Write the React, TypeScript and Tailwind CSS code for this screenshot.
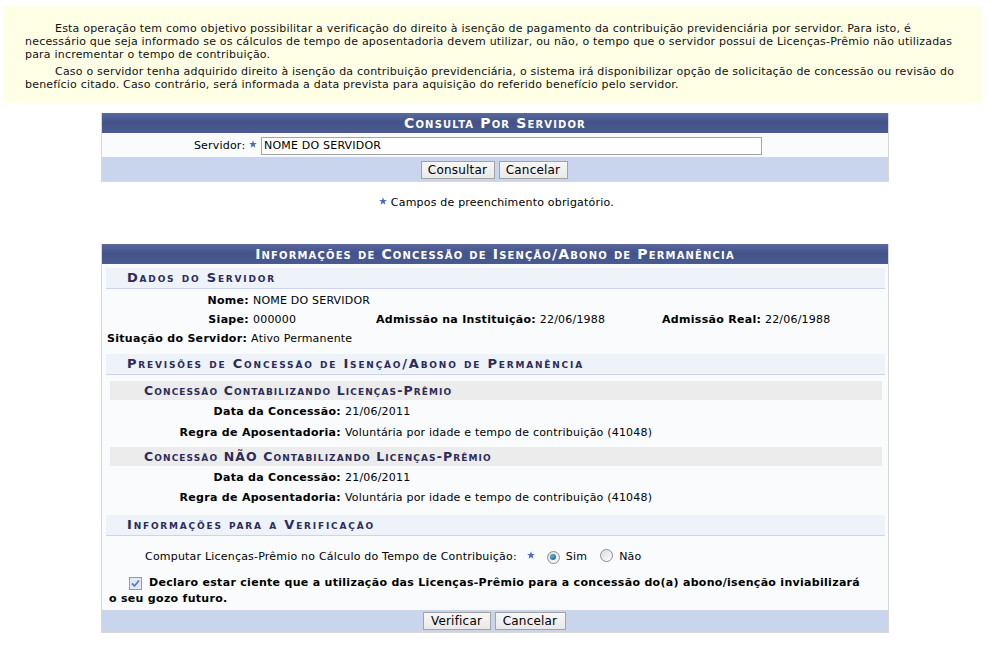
import React from "react";

const Star = () => (
  <svg width="8" height="8" viewBox="0 0 10 10" className="inline-block align-[1px]">
    <path d="M5 0.3 L6.2 3.7 L9.8 3.8 L7 6 L8 9.6 L5 7.5 L2 9.6 L3 6 L0.2 3.8 L3.8 3.7 Z" fill="#4a6cc0" />
  </svg>
);

const Btn = ({ children, w }: { children: React.ReactNode; w: string }) => (
  <button
    className={`h-[18px] ${w} border border-[#a3a3a3] bg-[linear-gradient(to_bottom,#f7f7f7,#e9e9e9)] text-[12px] leading-[16px] tracking-[0.2px] text-black`}
  >
    {children}
  </button>
);

const Caption = ({ children }: { children: React.ReactNode }) => (
  <div className="h-[20px] bg-[linear-gradient(to_bottom,#5a6a9e,#43538a_45%,#4a5b91)] text-center text-[14px] font-bold leading-[20px] tracking-[1.15px] text-white [font-variant:small-caps]">
    {children}
  </div>
);

const SubHeader = ({ children, cls }: { children: React.ReactNode; cls: string }) => (
  <div
    className={`ml-[4px] mr-[3px] h-[21px] border-b border-[#c8d5ec] bg-[#eef2f9] pl-[21px] text-[13px] font-bold leading-[20px] tracking-[1.8px] text-[#2c2c5a] [font-variant:small-caps] ${cls}`}
  >
    {children}
  </div>
);

const SubSub = ({ children, cls }: { children: React.ReactNode; cls: string }) => (
  <div
    className={`ml-[8px] mr-[6px] h-[19px] bg-[#ececec] pl-[34px] text-[12.5px] font-bold leading-[19px] tracking-[1.1px] text-[#2c2c5a] [font-variant:small-caps] ${cls}`}
  >
    {children}
  </div>
);

const Radio = ({ checked }: { checked: boolean }) => (
  <span className="inline-flex h-[13px] w-[13px] items-center justify-center rounded-full border border-[#8d8d8d] bg-[linear-gradient(to_bottom_right,#dcdcdc,#ffffff)] align-[-2px]">
    {checked && <span className="h-[6px] w-[6px] rounded-full bg-[radial-gradient(circle_at_35%_35%,#5ab0d8,#0a5a88)]" />}
  </span>
);

const L = ({ children }: { children: React.ReactNode }) => (
  <b className="tracking-[0.3px]">{children}</b>
);

export default function App() {
  return (
    <div className="min-h-[669px] bg-white pt-[6px] font-['Verdana','DejaVu_Sans',sans-serif] text-[11px] leading-[13px] tracking-[0.2px] text-black">
      <div className="ml-[3px] mr-[11px] bg-[#ffffe6] pb-[12px] pl-[22px] pr-[22px] pt-[16px] text-[#111]">
        <p className="indent-[30px]">
          Esta operação tem como objetivo possibilitar a verificação do direito à isenção de pagamento da contribuição previdenciária por servidor. Para isto, é necessário que seja informado se os cálculos de tempo de aposentadoria devem utilizar, ou não, o tempo que o servidor possui de Licenças-Prêmio não utilizadas para incrementar o tempo de contribuição.
        </p>
        <p className="mt-[4px] indent-[30px]">
          Caso o servidor tenha adquirido direito à isenção da contribuição previdenciária, o sistema irá disponibilizar opção de solicitação de concessão ou revisão do benefício citado. Caso contrário, será informada a data prevista para aquisição do referido benefício pelo servidor.
        </p>
      </div>

      {/* Consulta */}
      <div className="ml-[101px] mt-[10px] w-[788px] border border-[#d8d8d8] border-t-0">
        <Caption>Consulta Por Servidor</Caption>
        <div className="flex h-[24px] items-center bg-[#f9fbfd] pt-[1px]">
          <div className="w-[159px] pr-[4px] text-right">
            Servidor: <Star />
          </div>
          <div className="h-[18px] w-[501px] border border-[#a5a5a5] bg-white pl-[2px] text-[11px] leading-[16px]">
            NOME DO SERVIDOR
          </div>
        </div>
        <div className="flex h-[24px] items-center justify-center gap-[4px] bg-[#c8d5ec] pr-[2px] pt-[1px]">
          <Btn w="w-[74px]">Consultar</Btn>
          <Btn w="w-[69px]">Cancelar</Btn>
        </div>
      </div>

      <div className="mt-[14px] text-center">
        <Star /> Campos de preenchimento obrigatório.
      </div>

      {/* Informações */}
      <div className="ml-[101px] mt-[35px] w-[788px] border border-[#d8d8d8] border-t-0 bg-[#f9fbfd]">
        <Caption>Informações de Concessão de Isenção/Abono de Permanência</Caption>
        <div className="pt-[4px]">
          <SubHeader cls="">Dados do Servidor</SubHeader>
          <div className="mt-[2px] pl-[5px]">
            <div className="flex h-[19px] items-center">
              <div className="w-[146px] pr-[4px] text-right"><L>Nome:</L></div>
              <div>NOME DO SERVIDOR</div>
            </div>
            <div className="flex h-[19px] items-center">
              <div className="w-[146px] pr-[4px] text-right"><L>Siape:</L></div>
              <div className="w-[123px]">000000</div>
              <div className="w-[286px]">
                <L>Admissão na Instituição:</L> 22/06/1988
              </div>
              <div>
                <L>Admissão Real:</L> 22/06/1988
              </div>
            </div>
            <div className="flex h-[19px] items-center">
              <div className="pr-[4px]"><L>Situação do Servidor:</L></div>
              <div>Ativo Permanente</div>
            </div>
          </div>

          <SubHeader cls="mt-[6px] h-[20px] leading-[19px]">Previsões de Concessão de Isenção/Abono de Permanência</SubHeader>

          <SubSub cls="mt-[6px]">Concessão Contabilizando Licenças-Prêmio</SubSub>
          <div className="mt-[1px] pl-[5px]">
            <div className="flex h-[21px] items-center">
              <div className="w-[238px] pr-[4px] text-right"><L>Data da Concessão:</L></div>
              <div>21/06/2011</div>
            </div>
            <div className="flex h-[21px] items-center">
              <div className="w-[238px] pr-[4px] text-right"><L>Regra de Aposentadoria:</L></div>
              <div>Voluntária por idade e tempo de contribuição (41048)</div>
            </div>
          </div>

          <SubSub cls="mt-[4px]">Concessão NÃO Contabilizando Licenças-Prêmio</SubSub>
          <div className="mt-[1px] pl-[5px]">
            <div className="flex h-[20px] items-center">
              <div className="w-[238px] pr-[4px] text-right"><L>Data da Concessão:</L></div>
              <div>21/06/2011</div>
            </div>
            <div className="flex h-[20px] items-center">
              <div className="w-[238px] pr-[4px] text-right"><L>Regra de Aposentadoria:</L></div>
              <div>Voluntária por idade e tempo de contribuição (41048)</div>
            </div>
          </div>

          <SubHeader cls="mt-[8px] h-[20px] leading-[19px]">Informações para a Verificação</SubHeader>

          <div className="mt-[10px] flex h-[20px] items-center pl-[43px]">
            <span>Computar Licenças-Prêmio no Cálculo do Tempo de Contribuição:</span>
            <span className="ml-[10px]"><Star /></span>
            <span className="ml-[12px]"><Radio checked /></span>
            <span className="ml-[6px]">Sim</span>
            <span className="ml-[13px]"><Radio checked={false} /></span>
            <span className="ml-[6px]">Não</span>
          </div>

          <div className="mt-[9px] pl-[7px] pr-[20px] text-[11px] font-bold leading-[16px] tracking-[0.3px]">
            <span className="ml-[20px] mr-[7px] inline-flex h-[13px] w-[13px] items-center justify-center border border-[#8f9aae] bg-[#e4e8f0] align-[-2px]">
              <svg width="9" height="9" viewBox="0 0 9 9">
                <path d="M1 4.5 L3.5 7 L8 1.5" stroke="#5a7acb" strokeWidth="1.8" fill="none" />
              </svg>
            </span>
            Declaro estar ciente que a utilização das Licenças-Prêmio para a concessão do(a) abono/isenção inviabilizará o seu gozo futuro.
          </div>

          <div className="mt-[3px] flex h-[22px] items-center justify-center gap-[4px] bg-[#c8d5ec] pr-[2px]">
            <Btn w="w-[68px]">Verificar</Btn>
            <Btn w="w-[71px]">Cancelar</Btn>
          </div>
        </div>
      </div>
    </div>
  );
}
